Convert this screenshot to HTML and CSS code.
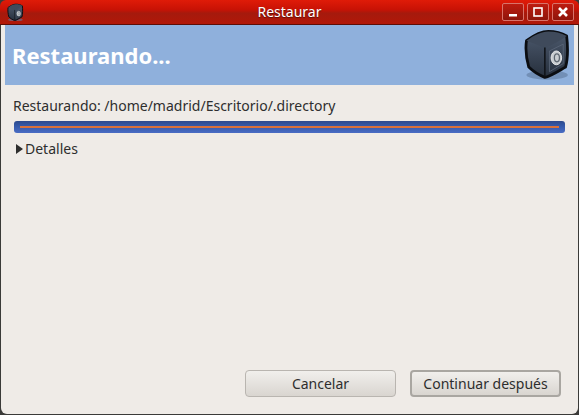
FILE: index.html
```html
<!DOCTYPE html>
<html lang="es">
<head>
    <meta charset="UTF-8">
    <title>Restaurar</title>
    <link rel="stylesheet" href="styles.css">
</head>
<body>

<div class="window">
    <div class="titlebar">
        <svg class="app-icon" width="18" height="18" viewBox="0 0 40 44">
            <use href="#safe"></use>
        </svg>
        <div class="title">Restaurar</div>
        <div class="win-buttons">
            <div class="win-button">
                <svg width="12" height="12" viewBox="0 0 12 12"><rect x="2" y="8" width="8" height="2.5" fill="#fff"/></svg>
            </div>
            <div class="win-button">
                <svg width="12" height="12" viewBox="0 0 12 12"><rect x="2" y="2" width="8" height="8" fill="none" stroke="#fff" stroke-width="1.6"/></svg>
            </div>
            <div class="win-button">
                <svg width="12" height="12" viewBox="0 0 12 12"><path d="M2 2L10 10M10 2L2 10" stroke="#fff" stroke-width="2.6"/></svg>
            </div>
        </div>
    </div>

    <div class="body">
        <div class="banner">
            <h1>Restaurando...</h1>
            <svg class="safe-icon" width="46" height="54" viewBox="0 0 40 47">
                <defs>
                    <linearGradient id="safeFront" x1="0" y1="0" x2="0" y2="1">
                        <stop offset="0" stop-color="#4d5a6e"/>
                        <stop offset="1" stop-color="#262f3c"/>
                    </linearGradient>
                    <g id="safe">
                        <ellipse cx="21" cy="41" rx="18" ry="4" fill="#5f7a9c" opacity="0.6"/>
                        <path d="M3 11C10 6 16 3 22 3C28 3 33 4 38 7C39 16 39 27 37 34C30 38 24 42 19 43C14 41 9 38 5 34C3 27 2 18 3 11Z" fill="url(#safeFront)" stroke="#0b0d11" stroke-width="2.4" stroke-linejoin="round"/>
                        <path d="M3 11C9 13 14 15 19 17C26 15 32 11 38 7C33 4 28 3 22 3C16 3 10 6 3 11Z" fill="#3f4a5b"/>
                        <path d="M19 17V42" stroke="#11151b" stroke-width="1.4"/>
                        <path d="M23 20L35 14V31L23 38Z" fill="none" stroke="#5b6779" stroke-width="0.7"/>
                        <ellipse cx="29" cy="26" rx="4.6" ry="6" fill="#c9cdd1" stroke="#eceeef" stroke-width="0.8"/>
                        <ellipse cx="29.5" cy="26" rx="2.2" ry="3.4" fill="none" stroke="#5d6670" stroke-width="1.1"/>
                    </g>
                </defs>
                <use href="#safe"></use>
            </svg>
        </div>

        <div class="content">
            <div class="status">Restaurando: /home/madrid/Escritorio/.directory</div>
            <div class="progress"><div class="progress-fill"></div></div>
            <div class="details">
                <span class="arrow"></span>
                <span>Detalles</span>
            </div>
        </div>

        <div class="actions">
            <button class="btn">Cancelar</button>
            <button class="btn btn-default">Continuar después</button>
        </div>
    </div>
</div>

</body>
</html>
```

FILE: styles.css
```css
html, body {
    margin: 0;
    padding: 0;
    height: 415px;
    overflow: hidden;
    background-color: #3a3a38;
}

body {
    font-family: "Noto Sans", "Open Sans", sans-serif;
    font-size: 14px;
    color: #2e2e2e;
}

.window {
    height: 415px;
    display: flex;
    flex-direction: column;
}

.titlebar {
    height: 25px;
    box-sizing: border-box;
    position: relative;
    display: flex;
    align-items: center;
    justify-content: space-between;
    padding: 0 5px 0 6px;
    border-radius: 6px 6px 0 0;
    border-bottom: 1px solid #5e0d06;
    background: linear-gradient(to bottom, #e01b08 0%, #c81205 40%, #a51a0d 55%, #b21708 100%);
}

.title {
    position: absolute;
    left: 0;
    right: 0;
    text-align: center;
    color: #fff;
    font-size: 14px;
    line-height: 22px;
    text-shadow: 0 1px 1px #5e0d06;
}

.win-buttons {
    display: flex;
    gap: 3px;
    margin-right: 0;
    position: relative;
}

.win-button {
    width: 22px;
    height: 18px;
    box-sizing: border-box;
    display: flex;
    align-items: center;
    justify-content: center;
    border: 1px solid #d8736a;
    border-radius: 2px;
    background: linear-gradient(to bottom, #bd1c10, #8f150b);
}

.body {
    flex: 1;
    display: flex;
    flex-direction: column;
    margin-left: 1px;
    margin-right: 1px;
    padding: 0 4px;
    background-color: #efebe7;
    border-radius: 0 0 6px 6px;
    margin-bottom: 1px;
}

.banner {
    height: 60px;
    display: flex;
    align-items: center;
    justify-content: space-between;
    padding: 0 5px 0 7px;
    background-color: #8fb0dc;
}

h1 {
    margin: 0;
    color: #fff;
    font-size: 22px;
    font-weight: bold;
}

.safe-icon {
    display: block;
}

.content {
    flex: 1;
    padding: 10px 9px 0 8px;
}

.status {
    line-height: 22px;
}

.progress {
    height: 12px;
    margin: 4px 0 0 1px;
    display: flex;
    align-items: center;
    padding: 0 6px;
    border-radius: 3px;
    background: linear-gradient(to bottom, #2d4a8c 0%, #3458a8 40%, #4a6cc4 100%);
}

.progress-fill {
    flex: 1;
    height: 2px;
    margin-top: -1px;
    background-color: #d8703a;
}

.details {
    display: flex;
    align-items: center;
    gap: 2px;
    margin-top: 6px;
    margin-left: 3px;
    line-height: 20px;
}

.arrow {
    width: 0;
    height: 0;
    border-left: 7px solid #2e2e2e;
    border-top: 5px solid transparent;
    border-bottom: 5px solid transparent;
}

.actions {
    display: flex;
    justify-content: flex-end;
    gap: 14px;
    padding: 0 13px 17px 0;
}

.btn {
    width: 151px;
    height: 27px;
    padding: 0;
    font-family: inherit;
    font-size: 14px;
    color: #2e2e2e;
    border: 1px solid #b9b5b0;
    border-radius: 4px;
    background: linear-gradient(to bottom, #f1efec, #d9d5d0);
}

.btn-default {
    border: 2px solid #a9a6a1;
}
```
